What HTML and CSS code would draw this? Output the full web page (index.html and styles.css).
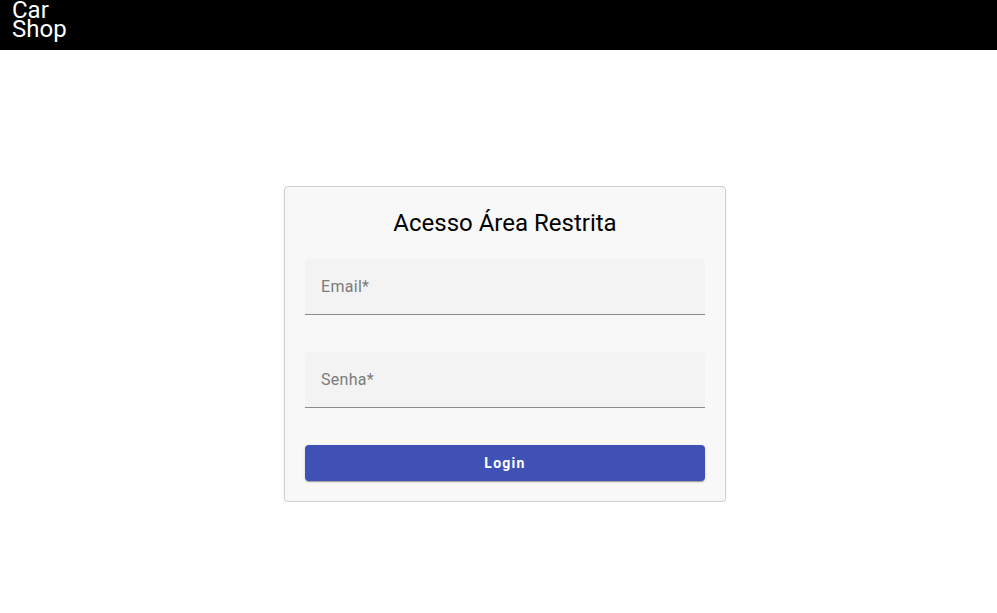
FILE: index.html
```html
<!DOCTYPE html>
<html lang="pt">
<head>
<meta charset="utf-8">
<title>Car Shop</title>
<link rel="stylesheet" href="styles.css">
</head>
<body>
<header class="topbar">
  <div class="brand">Car Shop</div>
</header>
<main class="page">
  <form class="card">
    <h2 class="card-title">Acesso Área Restrita</h2>
    <div class="field">
      <span class="field-label">Email*</span>
    </div>
    <div class="field">
      <span class="field-label">Senha*</span>
    </div>
    <button type="button" class="login-btn">Login</button>
  </form>
</main>
</body>
</html>
```
FILE: styles.css
```css
html, body {
  margin: 0;
  padding: 0;
  background: #ffffff;
  font-family: Roboto, "Liberation Sans", sans-serif;
}

.topbar {
  height: 50px;
  background: #000000;
  color: #ffffff;
  box-sizing: border-box;
  padding: 1px 0 0 12px;
}

.brand {
  width: 64px;
  font-size: 24px;
  line-height: 19px;
}

.page {
  display: flex;
  justify-content: center;
  padding-left: 13px;
  padding-top: 136px;
}

.card {
  width: 400px;
  padding: 0 20px 20px;
  background: #f8f8f8;
  border: 1px solid #cfcfcf;
  border-radius: 4px;
  box-shadow: 0 1px 2px rgba(0, 0, 0, 0.08);
  display: flex;
  flex-direction: column;
}

.card-title {
  margin: 0;
  padding-top: 20px;
  height: 72px;
  box-sizing: border-box;
  text-align: center;
  font-size: 24px;
  font-weight: 400;
  line-height: 32px;
  color: #000000;
}

.field {
  height: 56px;
  box-sizing: border-box;
  background: #f3f3f3;
  border-radius: 4px 4px 0 0;
  border-bottom: 1px solid #8c8c8c;
  padding: 0 16px;
  display: flex;
  align-items: center;
  margin-bottom: 37px;
}

.field-label {
  font-size: 16px;
  color: #7b7b7b;
  letter-spacing: 0.3px;
}

.login-btn {
  height: 36px;
  border: none;
  border-radius: 4px;
  background: #3f51b5;
  color: #ffffff;
  font-family: Roboto, "Liberation Sans", sans-serif;
  font-size: 14px;
  font-weight: 700;
  letter-spacing: 1.25px;
  box-shadow: 0 2px 1px -1px rgba(0,0,0,.2), 0 1px 1px 0 rgba(0,0,0,.14), 0 1px 3px 0 rgba(0,0,0,.12);
  padding: 0;
}
```
